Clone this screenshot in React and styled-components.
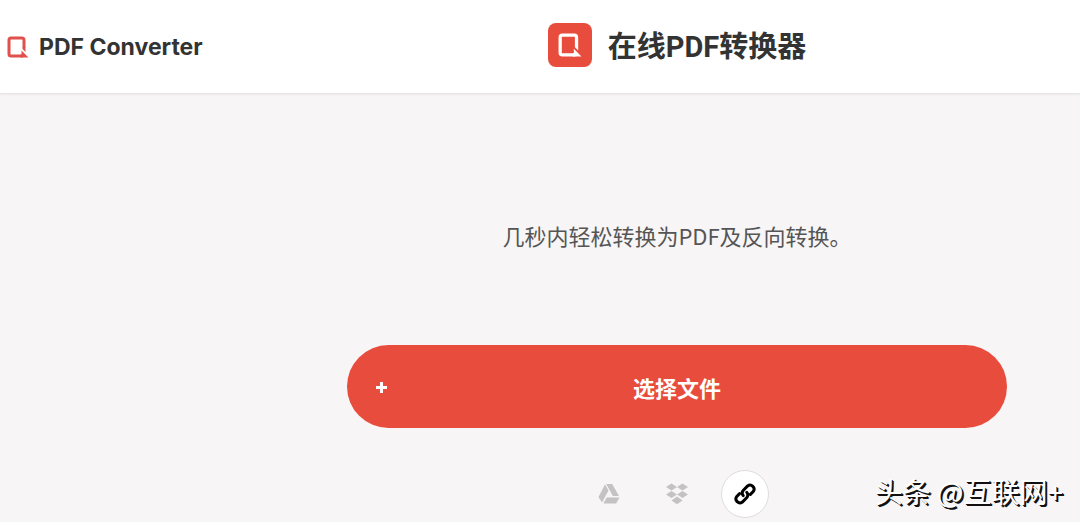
import styled, { createGlobalStyle } from "styled-components";

const GlobalStyle = createGlobalStyle`
    *{
        box-sizing:border-box;
    }
    body{
        margin:0;
        background:#f8f5f6;
        color:#333;
        font-family:"Noto Sans CJK SC", sans-serif;
        overflow:hidden;
    }
`;

const Page = styled.div`
    position:relative;
    min-height:100vh;
    display:flex;
    flex-direction:column;
`;

const Header = styled.header`
    display:grid;
    grid-template-columns:274px 1fr;
    align-items:center;
    height:94px;
    padding-bottom:4px;
    background:#fff;
    border-bottom:1px solid #e6e4e5;
    box-shadow:0 1px 2px rgba(0,0,0,0.05);
`;

const Brand = styled.a`
    display:flex;
    align-items:center;
    gap:10px;
    padding-left:7px;
    padding-top:4px;
    color:#333;
    font-family:Inter, "Noto Sans CJK SC", sans-serif;
    font-size:23px;
    line-height:32px;
    font-weight:700;
    white-space:nowrap;
    text-decoration:none;
`;

const TitleGroup = styled.div`
    display:flex;
    align-items:center;
    justify-content:center;
    gap:16px;
`;

const TitleIcon = styled.span`
    display:flex;
    align-items:center;
    justify-content:center;
    width:44px;
    height:44px;
    border-radius:8px;
    background:#e84c3d;
`;

const Title = styled.h1`
    margin:0;
    padding-top:4px;
    font-family:Roboto, "Noto Sans CJK SC", sans-serif;
    font-size:29px;
    line-height:44px;
    font-weight:700;
    white-space:nowrap;
`;

const Main = styled.main`
    display:flex;
    flex-direction:column;
    align-items:center;
    padding:125px 73px 0 347px;
`;

const Lead = styled.p`
    margin:0;
    color:#555;
    font-size:22px;
    line-height:32px;
    font-weight:400;
    white-space:nowrap;
`;

const UploadButton = styled.button`
    display:grid;
    grid-template-columns:16px 1fr 16px;
    align-items:center;
    width:100%;
    margin-top:94px;
    padding:24px 26px 23px;
    border:0;
    border-radius:42px;
    background:#e84c3d;
    color:#fff;
    font-family:inherit;
    font-size:22px;
    line-height:36px;
    font-weight:700;
    cursor:pointer;
`;

const Sources = styled.div`
    display:flex;
    gap:20px;
    margin-top:42px;
`;

const SourceButton = styled.button`
    display:flex;
    align-items:center;
    justify-content:center;
    width:48px;
    height:48px;
    padding:0;
    border:1px solid ${(props) => (props.$active ? "#ddd" : "transparent")};
    border-radius:50%;
    background:${(props) => (props.$active ? "#fff" : "transparent")};
    color:${(props) => (props.$active ? "#000" : "#c4c2c3")};
    cursor:pointer;
`;

const Watermark = styled.span`
    position:absolute;
    right:17px;
    bottom:11px;
    color:#fff;
    font-size:28px;
    line-height:40px;
    white-space:nowrap;
    text-shadow:1px 1px 0 #111, 2px 2px 0 #111;
`;

function LogoMark({ size, color }) {
    return (
        <svg width={size} height={size} viewBox="0 0 22 22" fill="none" aria-hidden="true">
            <path
                d="M17 12V4Q17 2 15 2H4Q2 2 2 4V18Q2 20 4 20H16"
                stroke={color}
                strokeWidth="3"
            />
            <path d="M14.5 14.5L21.5 21.5H13.5V18.5H14.5Z" fill={color} />
            <path d="M15.5 11.5H18.5V16L15.5 13Z" fill={color} />
        </svg>
    );
}

function PlusIcon() {
    return (
        <svg width="16" height="16" viewBox="0 0 16 16" aria-hidden="true">
            <path d="M8.5 3V14M3 8.5H14" stroke="#fff" strokeWidth="3" />
        </svg>
    );
}

function DriveIcon() {
    return (
        <svg width="22" height="20" viewBox="0 0 22 20" fill="currentColor" aria-hidden="true">
            <path d="M7 0.5L10.5 6.5L4 18.5L0.5 13Z" />
            <path d="M8.2 0H14.2L21 12H14.8Z" />
            <path d="M8.7 13.5H21.5L18.2 19.5H5.4Z" />
        </svg>
    );
}

function DropboxIcon() {
    return (
        <svg width="22" height="22" viewBox="0 0 22 22" fill="currentColor" aria-hidden="true">
            <path d="M5.5 0.5L11 4L5.5 7.5L0 4Z" />
            <path d="M16.5 0.5L22 4L16.5 7.5L11 4Z" />
            <path d="M5.5 8L11 11.5L5.5 15L0 11.5Z" />
            <path d="M16.5 8L22 11.5L16.5 15L11 11.5Z" />
            <path d="M11 13.6L16.5 17.4L11 21.2L5.5 17.4Z" />
        </svg>
    );
}

function LinkIcon() {
    return (
        <svg
            width="24"
            height="24"
            viewBox="0 0 24 24"
            fill="none"
            stroke="currentColor"
            strokeWidth="3"
            strokeLinecap="round"
            aria-hidden="true"
        >
            <path d="M10.2 13.6A4.2 4.2 0 0 1 10.4 8.2L14.6 4A4 4 0 0 1 20.2 9.6L17.4 12.4" />
            <path d="M13.8 10.4A4.2 4.2 0 0 1 13.6 15.8L9.4 20A4 4 0 0 1 3.8 14.4L6.6 11.6" />
        </svg>
    );
}

const sources = [
    { id: "drive", label: "Google Drive", Icon: DriveIcon },
    { id: "dropbox", label: "Dropbox", Icon: DropboxIcon },
    { id: "link", label: "URL", Icon: LinkIcon, active: true },
];

function App() {
    return (
        <Page>
            <GlobalStyle />
            <Header>
                <Brand href="#">
                    <LogoMark size={22} color="#e0504c" />
                    PDF Converter
                </Brand>
                <TitleGroup>
                    <TitleIcon>
                        <LogoMark size={24} color="#fff" />
                    </TitleIcon>
                    <Title>在线PDF转换器</Title>
                </TitleGroup>
            </Header>
            <Main>
                <Lead>几秒内轻松转换为PDF及反向转换。</Lead>
                <UploadButton type="button">
                    <PlusIcon />
                    <span>选择文件</span>
                </UploadButton>
                <Sources>
                    {sources.map(({ id, label, Icon, active }) => (
                        <SourceButton key={id} type="button" aria-label={label} $active={active}>
                            <Icon />
                        </SourceButton>
                    ))}
                </Sources>
            </Main>
            <Watermark>头条 @互联网+</Watermark>
        </Page>
    );
}

export default App;
